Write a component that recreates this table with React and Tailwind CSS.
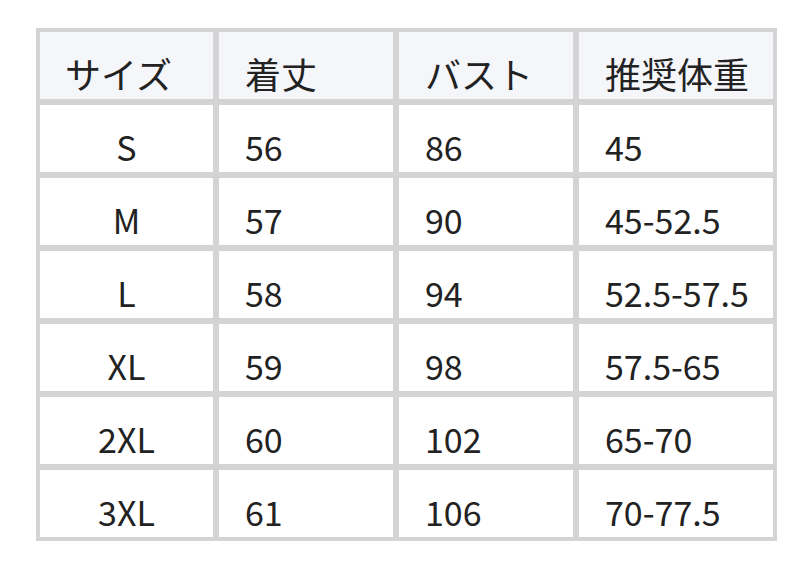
const headers = ["サイズ", "着丈", "バスト", "推奨体重"];

const rows = [
  ["S", "56", "86", "45"],
  ["M", "57", "90", "45-52.5"],
  ["L", "58", "94", "52.5-57.5"],
  ["XL", "59", "98", "57.5-65"],
  ["2XL", "60", "102", "65-70"],
  ["3XL", "61", "106", "70-77.5"],
];

const App = () => {
  return (
    <div
      className="w-[812px] h-[568px] bg-white pt-[28px] pl-[36px]"
      style={{ fontFamily: '"Noto Sans CJK JP", "Noto Sans", sans-serif' }}
    >
      <div className="w-[741px] bg-[#d4d4d4] p-[4px] grid grid-cols-[173px_174px_174px_194px] gap-[6px] leading-none text-[#222]">
        {headers.map((h, j) => (
          <div
            key={h}
            className={`h-[67px] bg-[#f5f6fa] flex items-end pb-[8px] text-[36px] ${
              j === 0 ? "pl-[25px]" : "pl-[26px]"
            }`}
          >
            {h}
          </div>
        ))}
        {rows.map((r) =>
          r.map((c, j) => (
            <div
              key={r[0] + j}
              className={`h-[67px] bg-white flex items-end pb-[8px] text-[34px] ${
                j === 0 ? "justify-center" : "pl-[26px]"
              }`}
            >
              {c}
            </div>
          ))
        )}
      </div>
    </div>
  );
};

export default App;
